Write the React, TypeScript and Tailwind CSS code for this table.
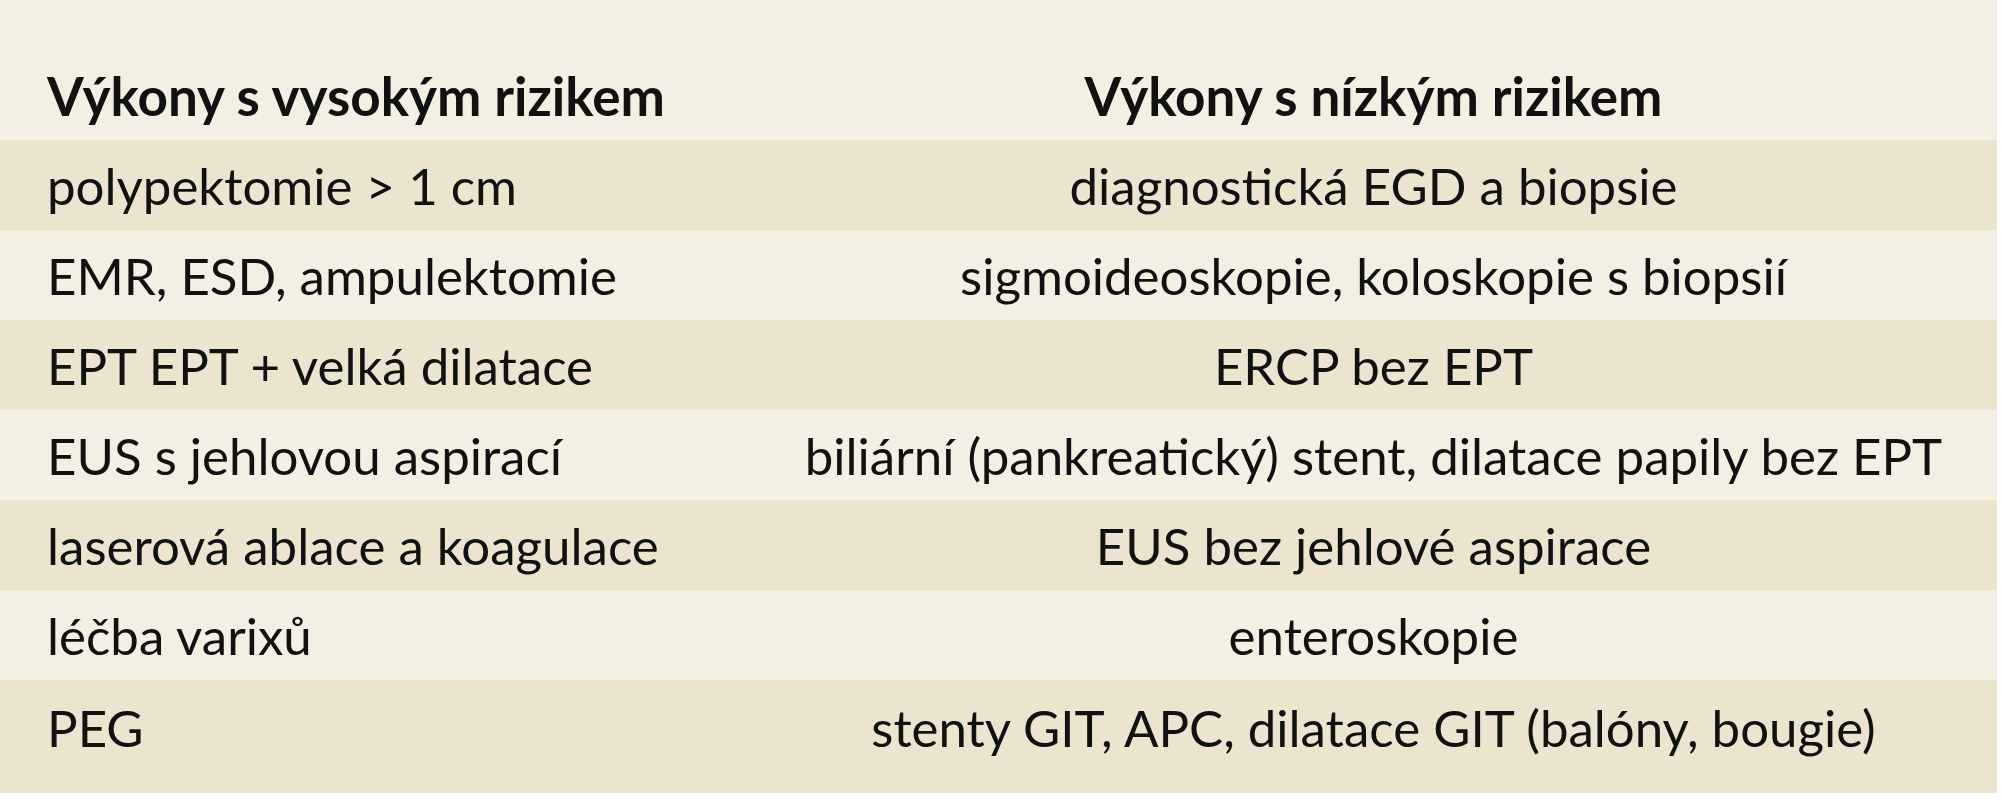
import React from 'react';

const rows: [string, string][] = [
  ['polypektomie > 1 cm', 'diagnostická EGD a biopsie'],
  ['EMR, ESD, ampulektomie', 'sigmoideoskopie, koloskopie s biopsií'],
  ['EPT EPT + velká dilatace', 'ERCP bez EPT'],
  ['EUS s jehlovou aspirací', 'biliární (pankreatický) stent, dilatace papily bez EPT'],
  ['laserová ablace a koagulace', 'EUS bez jehlové aspirace'],
  ['léčba varixů', 'enteroskopie'],
  ['PEG', 'stenty GIT, APC, dilatace GIT (balóny, bougie)'],
];

export default function App() {
  return (
    <div className="w-[2002px] h-[800px] bg-white">
      <div className="w-[1997px] h-[793px] bg-[#f4efe3] text-[#111111] font-['Lato',sans-serif] text-[51px] flex flex-col">
        <div className="h-[140px] grid grid-cols-[750px_1fr] items-end pb-[18px] font-bold text-[53px]">
          <div className="pl-[47px] leading-none whitespace-nowrap">Výkony s vysokým rizikem</div>
          <div className="text-center leading-none whitespace-nowrap">Výkony s nízkým rizikem</div>
        </div>
        {rows.map(([left, right], i) => (
          <div
            key={i}
            className={`grid grid-cols-[750px_1fr] ${
              i % 2 === 0 ? 'bg-[#ece4ce]' : 'bg-[#f4efe3]'
            } ${i === rows.length - 1 ? 'flex-1 items-start pt-[22px]' : 'h-[90px] items-center'}`}
          >
            <div className="pl-[47px] leading-none whitespace-nowrap">{left}</div>
            <div className="text-center leading-none whitespace-nowrap">{right}</div>
          </div>
        ))}
      </div>
    </div>
  );
}
